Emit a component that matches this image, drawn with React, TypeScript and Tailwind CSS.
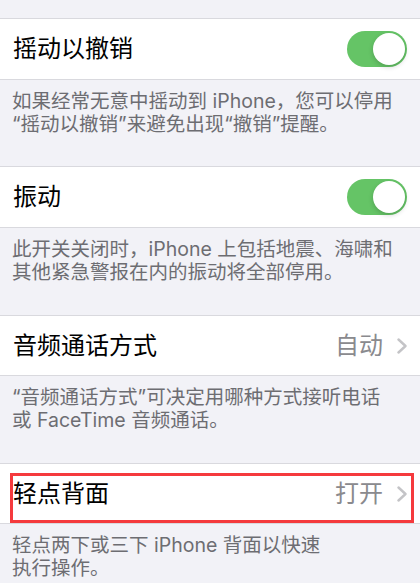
import React from "react";

type Item = {
  title: string;
  desc: [string, string];
  kind: "toggle" | "link";
  value?: string;
  highlight?: boolean;
  rowH: string;
  descH: string;
};

const items: Item[] = [
  {
    title: "摇动以撤销",
    desc: ["如果经常无意中摇动到 iPhone，您可以停用", "“摇动以撤销”来避免出现“撤销”提醒。"],
    kind: "toggle",
    rowH: "h-[62px]",
    descH: "h-[86px]",
  },
  {
    title: "振动",
    desc: ["此开关关闭时，iPhone 上包括地震、海啸和", "其他紧急警报在内的振动将全部停用。"],
    kind: "toggle",
    rowH: "h-[62px]",
    descH: "h-[87px]",
  },
  {
    title: "音频通话方式",
    desc: ["“音频通话方式”可决定用哪种方式接听电话", "或 FaceTime 音频通话。"],
    kind: "link",
    value: "自动",
    rowH: "h-[61px]",
    descH: "h-[87px]",
  },
  {
    title: "轻点背面",
    desc: ["轻点两下或三下 iPhone 背面以快速", "执行操作。"],
    kind: "link",
    value: "打开",
    highlight: true,
    rowH: "h-[61px]",
    descH: "h-[87px]",
  },
];

function Toggle() {
  return (
    <div className="relative h-[36px] w-[60px] rounded-full bg-[#65c466]">
      <div className="absolute right-[2px] top-[2px] h-[32px] w-[32px] rounded-full bg-white shadow-[0_2px_5px_rgba(0,0,0,0.18)]" />
    </div>
  );
}

function Chevron() {
  return (
    <svg width="10" height="16" viewBox="0 0 10 16" fill="none">
      <polyline
        points="1.5,1.5 8.5,8 1.5,14.5"
        stroke="#c4c4c7"
        strokeWidth="2.4"
        strokeLinecap="round"
        strokeLinejoin="round"
      />
    </svg>
  );
}

export default function App() {
  return (
    <div className="h-[583px] w-[420px] overflow-hidden bg-[#f2f2f7] font-['Inter','Noto_Sans_CJK_SC',sans-serif]">
      <div className="h-[18px]" />
      {items.map((it) => (
        <div key={it.title}>
          <div
            className={`relative flex ${it.rowH} items-center justify-between border-y border-[#d9d9de] bg-white pl-[13px] pr-[13px]`}
          >
            <span className="text-[24px] leading-none text-black">{it.title}</span>
            {it.kind === "toggle" ? (
              <Toggle />
            ) : (
              <div className="flex items-center gap-[14px]">
                <span className="text-[24px] leading-none text-[#8a8a8e]">{it.value}</span>
                <Chevron />
              </div>
            )}
            {it.highlight && (
              <div className="pointer-events-none absolute left-[10px] right-[6px] top-[9px] h-[50px] border-[3px] border-[#f53a3d]" />
            )}
          </div>
          <div className={`${it.descH} pl-[12px] pt-[10px] text-[19.5px] leading-[23px] text-[#6d6d72]`}>
            <div>{it.desc[0]}</div>
            <div>{it.desc[1]}</div>
          </div>
        </div>
      ))}
    </div>
  );
}
